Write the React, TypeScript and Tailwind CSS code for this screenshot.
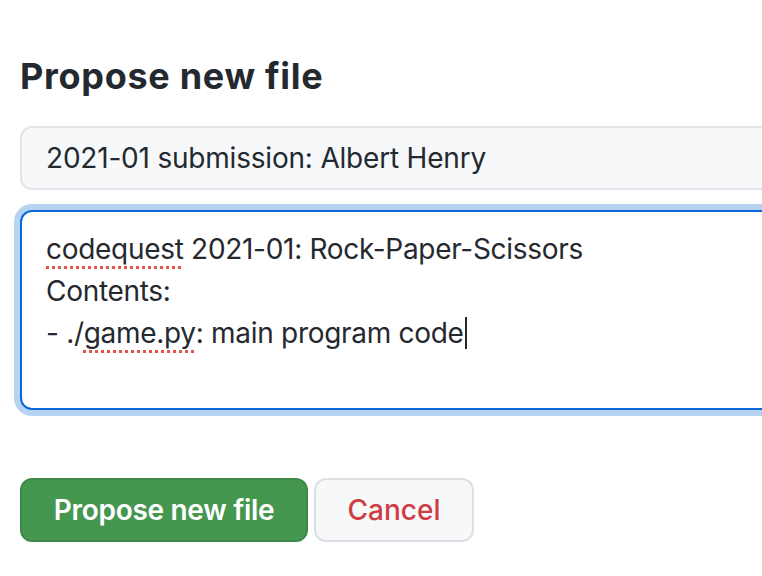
const font = { fontFamily: "Inter, 'Liberation Sans', sans-serif" };

function Squiggle({ children }: { children: React.ReactNode }) {
  return (
    <span className="underline decoration-dotted decoration-[#e5534b] decoration-[3px] underline-offset-[7px]">
      {children}
    </span>
  );
}

export default function App() {
  return (
    <div className="h-[576px] w-[762px] overflow-hidden bg-white text-[#24292f]" style={font}>
      <div className="w-[820px] pl-5 pt-[52px]">
        <h2 className="text-[36px] font-bold leading-[48px] tracking-[0.7px]">Propose new file</h2>

        <div className="mt-[26px] flex h-[64px] items-center rounded-[12px] border-2 border-[#e1e4e8] bg-[#f6f8fa] px-[24px] text-[28px] tracking-[-0.2px]">
          2021-01 submission: Albert Henry
        </div>

        <div className="mt-[20px] h-[200px] rounded-[12px] border-2 border-[#0969da] bg-white px-[24px] pt-[16px] text-[28px] leading-[42px] tracking-[-0.3px] shadow-[0_0_0_6px_#b6d3f2]">
          <div>
            <Squiggle>codequest</Squiggle> 2021-01: Rock-Paper-Scissors
          </div>
          <div>Contents:</div>
          <div className="flex items-center">
            <span>
              - ./<Squiggle>game.py</Squiggle>: main program code
            </span>
            <span className="ml-px inline-block h-[32px] w-[2px] bg-[#24292f]" />
          </div>
        </div>

        <div className="mt-[68px] flex gap-[6px]">
          <button className="h-[64px] w-[288px] rounded-[12px] border-2 border-[#3e8a4b] bg-[#45964f] text-[28px] font-semibold tracking-[-0.3px] text-white">
            Propose new file
          </button>
          <button className="h-[64px] w-[160px] rounded-[12px] border-2 border-[#dcdfe3] bg-[#f6f8fa] text-[28px] font-medium text-[#cf3d44]">
            Cancel
          </button>
        </div>
      </div>
    </div>
  );
}
